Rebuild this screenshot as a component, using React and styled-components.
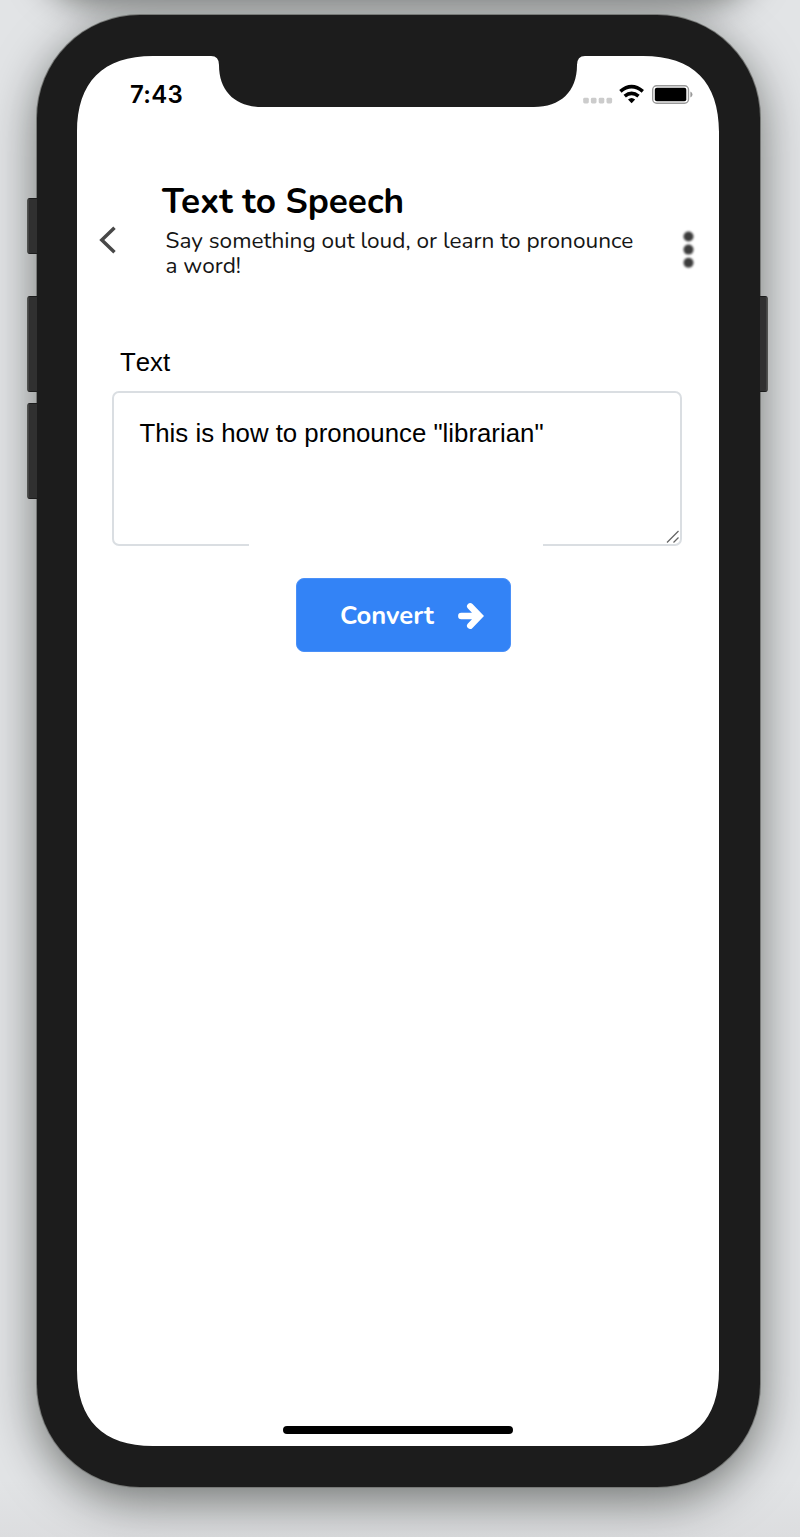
import React from "react";
import styled, { createGlobalStyle } from "styled-components";

const GlobalStyle = createGlobalStyle`
  *, *::before, *::after { box-sizing: border-box; }
  html, body { margin: 0; padding: 0; }
  body { background: #e1e3e5; }
`;

const rounded = `"Nunito", Lato, "Open Sans", sans-serif`;
const SCREEN_SHAPE =
  "M0 76C0 26 26 0 76 0H134Q142 0 142 9C142 36 159 51 185 51H457C483 51 500 36 500 9Q500 0 508 0H566C616 0 642 26 642 76V1314C642 1364 616 1390 566 1390H76C26 1390 0 1364 0 1314Z";

const Desk = styled.main`
  position: relative;
  width: 800px;
  height: 1537px;
  padding: 15px 40px 0 37px;
  overflow: hidden;
  background: linear-gradient(#e2e4e6 1480px, #dcdddf);
`;

const UpperShadow = styled.div`
  position: absolute;
  top: -100px;
  left: 37px;
  width: 723px;
  height: 92px;
  border-radius: 0 0 60px 60px;
  box-shadow: 0 12px 34px rgba(6, 9, 4, 0.5);
`;

const Phone = styled.div`
  position: relative;
  width: 723px;
  height: 1472px;
  padding: 41px 41px 41px 40px;
  border-radius: 103px;
  background: #1c1c1c;
  box-shadow: 0 0 0 1px #777977, 0 13px 48px rgba(6, 9, 4, 0.52);
`;

const SideKey = styled.span`
  position: absolute;
  top: ${(p) => p.$top}px;
  ${(p) => (p.$right ? "right: -8px" : "left: -10px")};
  width: ${(p) => (p.$right ? 9 : 11)}px;
  height: ${(p) => p.$height}px;
  border: 1px solid #1c1c1c;
  border-${(p) => (p.$right ? "right" : "left")}-color: #50524f;
  border-radius: ${(p) => (p.$right ? "0 3px 3px 0" : "3px 0 0 3px")};
  background: #303030;
  box-shadow: inset ${(p) => (p.$right ? -1 : 1)}px 0 #444;
`;

const Screen = styled.div`
  display: flex;
  flex-direction: column;
  width: 642px;
  height: 1390px;
  background: #fff;
  color: #000;
  clip-path: path("${SCREEN_SHAPE}");
`;

const StatusBar = styled.div`
  display: flex;
  justify-content: space-between;
  height: 122px;
  padding: 24px 26px 0 53px;
`;

const Clock = styled.time`
  font: 600 24px/30px Inter, sans-serif;
  letter-spacing: 0.3px;
`;

const StatusIcons = styled.svg`
  width: 110px;
  height: 30px;
`;

const Header = styled.header`
  display: grid;
  grid-template-columns: 20px 1fr 16px;
  height: 156px;
  padding: 0 22px 0 21px;
`;

const BackIcon = styled.svg`
  width: 20px;
  height: 30px;
  margin-top: 47px;
  filter: blur(0.5px);
`;

const MoreIcon = styled.svg`
  width: 16px;
  height: 44px;
  margin-top: 50px;
  filter: blur(0.9px);
`;

const Heading = styled.div`
  padding-left: 44px;
`;

const Title = styled.h1`
  margin: 0;
  font: 700 35.2px/46px ${rounded};
`;

const Subtitle = styled.p`
  width: 482px;
  margin: 4px 0 0 3.5px;
  color: #151515;
  font: 400 22.6px/25px ${rounded};
`;

const Form = styled.form`
  display: flex;
  flex-direction: column;
  align-items: center;
`;

const Field = styled.div`
  width: 570px;
  margin-left: -3px;
  font: 25.8px/30px "Liberation Sans", Arial, sans-serif;
  font-kerning: none;
`;

const FieldLabel = styled.div`
  height: 57px;
  padding: 13px 0 0 8.5px;
`;

const TextBox = styled.div`
  position: relative;
  height: 155px;
  padding: 25px 26px;
  border: 2px solid #dadee2;
  border-radius: 7px;
`;

const ResizeGrip = styled.svg`
  position: absolute;
  right: 0;
  bottom: 0;
  width: 14px;
  height: 14px;
`;

const Action = styled.div`
  position: relative;
  display: flex;
  width: 294px;
  margin: -3px 0 0 -4px;
  padding: 35px 0 0 47px;
  background: #fff;
`;

const ConvertButton = styled.button`
  display: flex;
  align-items: center;
  width: 215px;
  height: 74px;
  padding: 2px 26px 0 43px;
  border: 1px solid #4a90f8;
  border-radius: 8px;
  background: #3383f6;
  color: #fff;
  font: 700 25.6px/32px ${rounded};
  justify-content: space-between;
`;

const ArrowIcon = styled.svg`
  width: 26px;
  height: 28px;
`;

const HomeBar = styled.div`
  width: 230px;
  height: 8px;
  margin: auto auto 12px;
  border-radius: 4px;
  background: #000;
`;

export default function App() {
  return (
    <>
      <GlobalStyle />
      <Desk>
        <UpperShadow />
        <Phone>
          <SideKey $top={183} $height={56} />
          <SideKey $top={281} $height={96} />
          <SideKey $top={388} $height={96} />
          <SideKey $right $top={281} $height={96} />
          <Screen>
            <StatusBar>
              <Clock>7:43</Clock>
              <StatusIcons viewBox="0 0 110 30">
                <g fill="#ccc">
                  {[0, 7.7, 15.5, 23.3].map((x) => (
                    <rect key={x} x={x + 0.2} y="17.8" width="5.6" height="5.6" rx="1.4" />
                  ))}
                </g>
                <g fill="none" stroke="#000" strokeWidth="3.6">
                  <path d="M37.4 11.4Q48.6 2 59.8 11.4" />
                  <path d="M41.7 16.2Q48.6 10.4 55.5 16.2" />
                </g>
                <path d="M48.6 23.2L45 19.5Q48.6 16.4 52.2 19.5Z" />
                <rect x="69.7" y="5.7" width="35.8" height="17.6" rx="4" fill="none" stroke="#999" strokeWidth="1.4" />
                <rect x="71.8" y="7.8" width="31.5" height="13.5" rx="2" />
                <path d="M107.4 11.5Q109.5 12.4 109.5 14.5Q109.5 16.6 107.4 17.5Z" fill="#999" />
              </StatusIcons>
            </StatusBar>
            <Header>
              <BackIcon viewBox="0 0 20 30" fill="none" stroke="#484848" strokeWidth="3.5">
                <path d="M16.5 2.7L3.8 15L16.5 27.3" />
              </BackIcon>
              <Heading>
                <Title>Text to Speech</Title>
                <Subtitle>Say something out loud, or learn to pronounce a word!</Subtitle>
              </Heading>
              <MoreIcon viewBox="0 0 16 44" fill="#3c3c3c">
                <circle cx="7.5" cy="8.5" r="5" />
                <circle cx="7.5" cy="21.6" r="5" />
                <circle cx="7.5" cy="34.7" r="5" />
              </MoreIcon>
            </Header>
            <Form>
              <Field>
                <FieldLabel>Text</FieldLabel>
                <TextBox>
                  This is how to pronounce "librarian"
                  <ResizeGrip viewBox="0 0 14 14" fill="none" stroke="#666" strokeWidth="1.3">
                    <path d="M1 12.5L12.5 1M7.5 12.5L12.5 7.5" />
                  </ResizeGrip>
                </TextBox>
              </Field>
              <Action>
                <ConvertButton type="button">
                  Convert
                  <ArrowIcon viewBox="0 0 26 28" fill="none" stroke="#fff" strokeWidth="6.4" strokeLinecap="round">
                    <path d="M3.3 14H20M12.2 4.3L21.6 14L12.2 23.7" />
                  </ArrowIcon>
                </ConvertButton>
              </Action>
            </Form>
            <HomeBar />
          </Screen>
        </Phone>
      </Desk>
    </>
  );
}
